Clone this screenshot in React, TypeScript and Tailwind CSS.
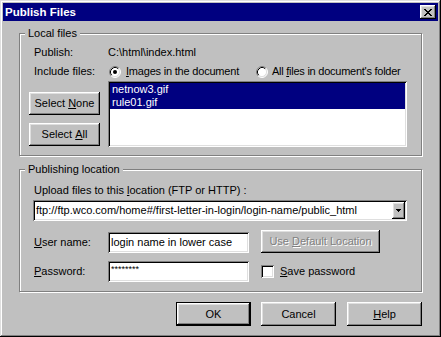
import React from "react";

const raised =
  "shadow-[inset_-1px_-1px_0_#000,inset_1px_1px_0_#fff,inset_-2px_-2px_0_#808080,inset_2px_2px_0_#dfdfdf]";
const sunken =
  "shadow-[inset_1px_1px_0_#808080,inset_-1px_-1px_0_#fff,inset_2px_2px_0_#000,inset_-2px_-2px_0_#dfdfdf]";
const etched = "border border-[#808080] shadow-[1px_1px_0_#fff,inset_1px_1px_0_#fff]";

function Radio({ checked }: { checked?: boolean }) {
  return (
    <svg width="12" height="12" viewBox="0 0 12 12" className="shrink-0">
      <circle cx="6" cy="6" r="5" fill="#fff" />
      <path d="M2.11 9.89 A5.5 5.5 0 0 1 9.89 2.11" fill="none" stroke="#808080" strokeWidth="1" />
      <path d="M9.89 2.11 A5.5 5.5 0 0 1 2.11 9.89" fill="none" stroke="#fff" strokeWidth="1" />
      <path d="M2.82 9.18 A4.5 4.5 0 0 1 9.18 2.82" fill="none" stroke="#000" strokeWidth="1" />
      <path d="M9.18 2.82 A4.5 4.5 0 0 1 2.82 9.18" fill="none" stroke="#dfdfdf" strokeWidth="1" />
      {checked && <circle cx="6" cy="6" r="2" fill="#000" />}
    </svg>
  );
}

function CloseGlyph() {
  const rows = [
    [0, 1, 6, 7],
    [1, 2, 5, 6],
    [2, 3, 4, 5],
    [3, 4],
    [2, 3, 4, 5],
    [1, 2, 5, 6],
    [0, 1, 6, 7],
  ];
  return (
    <svg width="8" height="7" viewBox="0 0 8 7" shapeRendering="crispEdges">
      {rows.map((r, y) => r.map((x) => <rect key={`${x}-${y}`} x={x} y={y} width="1" height="1" fill="#000" />))}
    </svg>
  );
}

function Btn({
  children,
  className = "",
  isDefault,
}: {
  children: React.ReactNode;
  className?: string;
  isDefault?: boolean;
}) {
  if (isDefault) {
    return (
      <div className={`border border-black bg-[#c0c0c0] ${className}`}>
        <div className={`w-full h-full flex items-center justify-center ${raised}`}>{children}</div>
      </div>
    );
  }
  return <div className={`bg-[#c0c0c0] flex items-center justify-center ${raised} ${className}`}>{children}</div>;
}

export default function App() {
  return (
    <div
      className={`w-[441px] h-[337px] bg-[#c0c0c0] p-[3px] flex flex-col text-[11px] text-black font-['Liberation_Sans',Arial,sans-serif] shadow-[inset_-1px_-1px_0_#000,inset_1px_1px_0_#dfdfdf,inset_-2px_-2px_0_#808080,inset_2px_2px_0_#fff]`}
    >
      {/* Title bar */}
      <div className="h-[18px] bg-[#000080] flex items-center justify-between pl-[2px] pr-[2px] shrink-0">
        <span className="text-white font-bold text-[11.5px] leading-[18px]">Publish Files</span>
        <div className={`w-[16px] h-[14px] bg-[#c0c0c0] flex items-center justify-center ${raised}`}>
          <CloseGlyph />
        </div>
      </div>

      {/* Local files */}
      <div className={`relative mt-[12px] ml-[16px] w-[403px] h-[123px] shrink-0 pt-[9px] pl-[9px] ${etched}`}>
        <span className="absolute left-[5px] top-[-8px] px-[3px] bg-[#c0c0c0] leading-[14px]">Local files</span>
        <div className="flex items-center h-[19px] pl-[5px] leading-[19px]">
          <span className="w-[74px] shrink-0">Publish:</span>
          <span>C:\html\index.html</span>
        </div>
        <div className="flex items-center h-[19px] pl-[5px] leading-[19px]">
          <span className="w-[74px] shrink-0">Include files:</span>
          <div className="flex items-center w-[148px] shrink-0 pl-[1px]">
            <Radio checked />
            <span className="ml-[5px] tracking-[-0.2px]">
              <span className="underline">I</span>mages in the document
            </span>
          </div>
          <div className="flex items-center">
            <Radio />
            <span className="ml-[4px] tracking-[-0.25px]">
              All <span className="underline">f</span>iles in document's folder
            </span>
          </div>
        </div>
        <div className="flex">
          <div className="w-[79px] shrink-0 flex flex-col pt-[11px] gap-[8px]">
            <Btn className="w-[71px] h-[23px]">
              Select&nbsp;<span className="underline">N</span>one
            </Btn>
            <Btn className="w-[71px] h-[23px]">
              Select&nbsp;<span className="underline">A</span>ll
            </Btn>
          </div>
          <div className={`w-[299px] h-[66px] bg-white p-[2px] ${sunken}`}>
            <div className="h-[13px] leading-[13px] bg-[#000080] text-white pl-[2px]">netnow3.gif</div>
            <div className="h-[13px] leading-[13px] bg-[#000080] text-white pl-[2px]">rule01.gif</div>
          </div>
        </div>
      </div>

      {/* Publishing location */}
      <div className={`relative mt-[13px] ml-[16px] w-[403px] h-[123px] shrink-0 pt-[11px] pl-[13px] ${etched}`}>
        <span className="absolute left-[5px] top-[-8px] px-[3px] bg-[#c0c0c0] leading-[14px]">Publishing location</span>
        <div className="h-[19px] leading-[19px] pl-[1px]">
          Upload files to this <span className="underline">l</span>ocation (FTP or HTTP) :
        </div>
        <div className={`w-[374px] h-[21px] bg-white p-[2px] flex items-center ${sunken}`}>
          <span className="flex-1 leading-[17px] pl-[1px] whitespace-nowrap overflow-hidden">
            ftp://ftp.wco.com/home#/first-letter-in-login/login-name/public_html
          </span>
          <div className={`w-[13px] h-[17px] bg-[#c0c0c0] flex items-center justify-center ${raised}`}>
            <svg width="5" height="3" viewBox="0 0 5 3" shapeRendering="crispEdges">
              <rect x="0" y="0" width="5" height="1" fill="#000" />
              <rect x="1" y="1" width="3" height="1" fill="#000" />
              <rect x="2" y="2" width="1" height="1" fill="#000" />
            </svg>
          </div>
        </div>
        <div className="flex items-end mt-[9px] h-[23px]">
          <span className="w-[75px] shrink-0 pl-[1px] h-[21px] leading-[21px]">
            <span className="underline">U</span>ser name:
          </span>
          <div className={`w-[141px] h-[21px] bg-white p-[2px] leading-[17px] pl-[3px] ${sunken}`}>
            login name in lower case
          </div>
          <Btn className="ml-[12px] w-[119px] h-[23px] text-[#808080] [text-shadow:1px_1px_0_#fff]">
            Use&nbsp;<span className="underline">D</span>efault Location
          </Btn>
        </div>
        <div className="flex items-center mt-[8px] h-[21px]">
          <span className="w-[75px] shrink-0 pl-[1px] leading-[21px]">
            <span className="underline">P</span>assword:
          </span>
          <div className={`w-[141px] h-[21px] bg-white p-[2px] pl-[3px] leading-[13px] text-[9px] ${sunken}`}>
            ********
          </div>
          <div className={`ml-[12px] w-[13px] h-[13px] bg-white shrink-0 ${sunken}`} />
          <span className="ml-[6px]">
            <span className="underline">S</span>ave password
          </span>
        </div>
      </div>

      {/* Bottom buttons */}
      <div className="flex justify-end pr-[16px] mt-[10px]">
        <Btn isDefault className="w-[75px] h-[24px]">
          OK
        </Btn>
        <Btn className="ml-[10px] w-[75px] h-[24px]">Cancel</Btn>
        <Btn className="ml-[11px] w-[75px] h-[24px]">
          <span className="underline">H</span>elp
        </Btn>
      </div>
    </div>
  );
}
